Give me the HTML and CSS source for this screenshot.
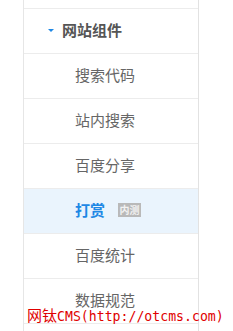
FILE: index.html
```html
<!DOCTYPE html>
<html lang="zh-CN">
<head>
<meta charset="utf-8">
<link rel="stylesheet" href="styles.css">
</head>
<body>
<div class="page">
  <nav class="menu">
    <div class="row row-prev"></div>
    <div class="row row-head"><span class="caret"></span><span class="head-text">网站组件</span></div>
    <div class="row item">搜索代码</div>
    <div class="row item">站内搜索</div>
    <div class="row item">百度分享</div>
    <div class="row item active">打赏<span class="badge">内测</span></div>
    <div class="row item">百度统计</div>
    <div class="row item">数据规范</div>
  </nav>
  <div class="mark"><span class="mark-cjk">网钛</span><span class="mark-lat">CMS(http://otcms.com)</span></div>
</div>
</body>
</html>
```
FILE: styles.css
```css
html, body {
  margin: 0;
  padding: 0;
  background: #fff;
}
.page {
  position: relative;
  width: 233px;
  height: 331px;
  overflow: hidden;
  font-family: "Noto Sans CJK SC", "Noto Sans", sans-serif;
}
.menu {
  margin-left: 23px;
  width: 174px;
  border-left: 1px solid #e6e6e6;
  border-right: 1px solid #e2e2e2;
  display: flex;
  flex-direction: column;
  min-height: 331px;
}
.row {
  box-sizing: border-box;
  height: 45px;
  padding-bottom: 4px;
  border-bottom: 1px solid #ececec;
  display: flex;
  align-items: center;
}
.row-prev {
  height: 9px;
  padding-bottom: 0;
}
.row-head {
  padding-left: 24px;
}
.caret {
  width: 0;
  height: 0;
  border-left: 3px solid transparent;
  border-right: 3px solid transparent;
  border-top: 3px solid #1e88e5;
  margin-right: 8px;
  margin-top: 2px;
}
.head-text {
  font-size: 15px;
  font-weight: bold;
  color: #555;
}
.item {
  padding-left: 51px;
  font-size: 15px;
  color: #666;
}
.item.active {
  background: #eaf4fd;
  color: #1e88e5;
  font-weight: bold;
}
.badge {
  margin-left: 13px;
  margin-top: 2px;
  width: 23px;
  height: 14px;
  background: #b9b9b9;
  color: #f2f2f2;
  font-size: 10px;
  font-weight: bold;
  line-height: 14px;
  text-align: center;
}
.mark {
  position: absolute;
  left: 27px;
  top: 304px;
  color: #e00000;
  line-height: 20px;
  white-space: nowrap;
}
.mark-cjk {
  font-family: "Noto Sans CJK SC", sans-serif;
  font-size: 15px;
}
.mark-lat {
  font-family: "DejaVu Sans Mono", monospace;
  font-size: 13.2px;
}
```
